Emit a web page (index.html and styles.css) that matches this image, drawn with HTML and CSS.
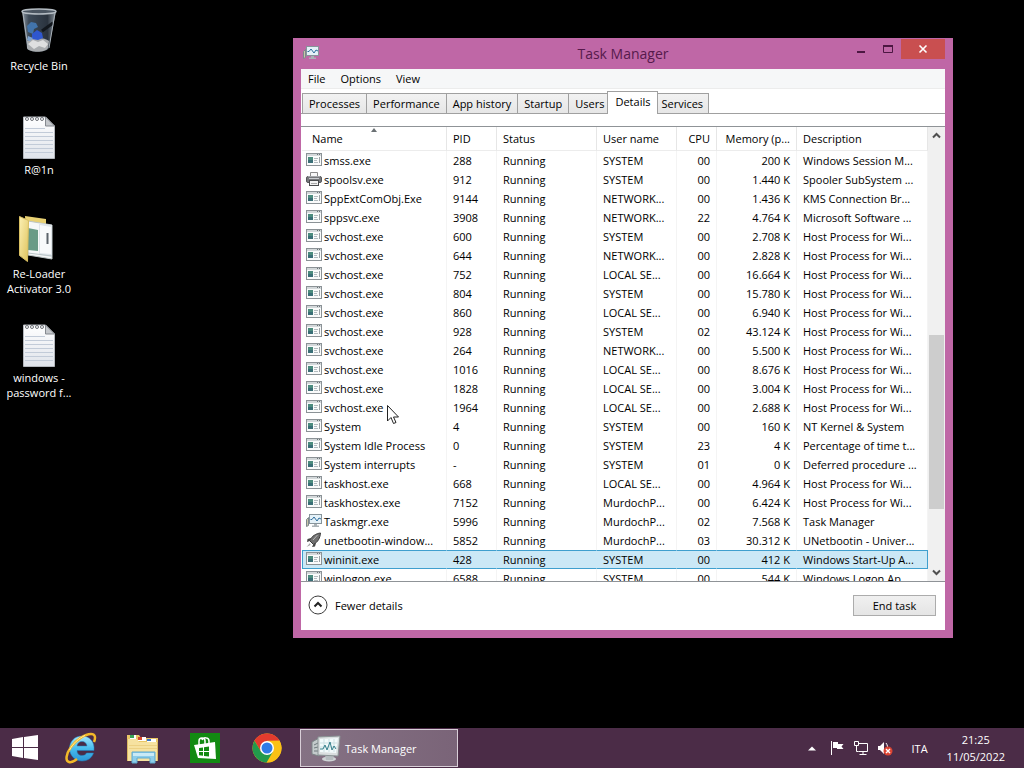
FILE: index.html
```html
<!DOCTYPE html>
<html lang="en">
<head>
    <meta charset="UTF-8">
    <meta name="viewport" content="width=device-width, initial-scale=1.0">
    <title>Task Manager</title>
    <link rel="stylesheet" href="styles.css">
</head>
<body>

<!-- shared icons -->
<svg class="sprite" aria-hidden="true">
    <defs>
        <linearGradient id="paper" x1="0" y1="0" x2="0" y2="1">
            <stop offset="0" stop-color="#ffffff"/>
            <stop offset="1" stop-color="#dfe3ea"/>
        </linearGradient>
        <linearGradient id="folder" x1="0" y1="0" x2="1" y2="1">
            <stop offset="0" stop-color="#fbf0b4"/>
            <stop offset="1" stop-color="#dfc35c"/>
        </linearGradient>
        <linearGradient id="ieBlue" x1="0" y1="0" x2="0" y2="1">
            <stop offset="0" stop-color="#a4e6fb"/>
            <stop offset="0.5" stop-color="#48bdee"/>
            <stop offset="1" stop-color="#2b95d6"/>
        </linearGradient>
        <linearGradient id="glass" x1="0" y1="0" x2="1" y2="0">
            <stop offset="0" stop-color="#8d98a3"/>
            <stop offset="0.2" stop-color="#3d4a58"/>
            <stop offset="0.75" stop-color="#2a333e"/>
            <stop offset="1" stop-color="#8b949c"/>
        </linearGradient>
    </defs>

    <symbol id="i-exe" viewBox="0 0 16 15">
        <rect x="0.5" y="0.5" width="15" height="12" fill="#fafbfb" stroke="#8b9296"/>
        <rect x="1" y="1" width="14" height="2" fill="#d3d8da"/>
        <rect x="11" y="1" width="1" height="1" fill="#6c7377"/>
        <rect x="13" y="1" width="1" height="1" fill="#6c7377"/>
        <rect x="2" y="4" width="5" height="6" fill="#4c8c7e"/>
        <rect x="2" y="7" width="5" height="3" fill="#3a6f77"/>
        <path d="M8 5.500h4M8 7.500h3M8 9.500h4" stroke="#b3bbbf"/>
        <path d="M13.500 4v6" stroke="#9aa2a6"/>
    </symbol>

    <symbol id="i-printer" viewBox="0 0 16 17">
        <path d="M4.500 6V1.500h7V6" fill="#f8f8f8" stroke="#8b8b8b"/>
        <rect x="0.500" y="5.500" width="15" height="6" rx="1.500" fill="#77797c" stroke="#55575a"/>
        <path d="M3 7.500h10" stroke="#c9cccf"/>
        <path d="M2 5.500h12" stroke="#a5a8ab"/>
        <rect x="3.500" y="9.500" width="9" height="5" fill="#f3f3f3" stroke="#4a4c4f"/>
        <path d="M5 12.500h6" stroke="#a9a9a9"/>
    </symbol>

    <symbol id="i-monitor" viewBox="0 0 16 15">
        <path d="M0.500 5.500l2-2v8l-2 1z" fill="#c9c6a8" stroke="#7d888d"/>
        <path d="M8 10h3v1.500h2V13H6v-1.500h2z" fill="#aab2b6"/>
        <rect x="3.500" y="0.500" width="12" height="9" fill="#e4f1f8" stroke="#87949b"/>
        <path d="M4.500 5.500H6L8 3l3 4 2-3 2 1" fill="none" stroke="#2d6c9c"/>
    </symbol>

    <symbol id="i-monitor-lg" viewBox="0 0 30 28">
        <path d="M1 8l7-4v18l-7-2z" fill="#c4cbcc" stroke="#7c8587"/>
        <path d="M3 11l4-2M3 14l4-1M3 17h4" stroke="#6f797c"/>
        <ellipse cx="18" cy="25" rx="7" ry="2.500" fill="#cfd4d6"/>
        <path d="M14 21h9l-1 5h-7z" fill="#b5bcbf"/>
        <path d="M7 3l22-1-2 20-20-1z" fill="#d9dedf" stroke="#8a9395"/>
        <path d="M9 5l18-1-2 15-16-1z" fill="#f2fafb"/>
        <path d="M9 9h17M9 13h17M13 5v13M18 5v13M23 5v13" stroke="#cbdfe2"/>
        <path d="M9 15h3l2-4 2 5 3-8 2 8 2-4 2 3" fill="none" stroke="#35808c"/>
    </symbol>

    <symbol id="i-rocket" viewBox="0 0 16 17">
        <path d="M14.500 1C10 1.500 6 4 3.500 8.500l4 4C12 10 14 6 14.500 1z" fill="#707070" stroke="#3a3a3a"/>
        <path d="M5 6L1.500 7 1 10l3-1zM10 11l-1 3.500L6 15l1.500-3z" fill="#454545"/>
        <path d="M4 11l-3.500 4 4-2z" fill="#a5a5a5"/>
        <path d="M11.500 3L7 8" stroke="#b8b8b8"/>
    </symbol>

    <symbol id="i-note" viewBox="0 0 32 44">
        <path d="M0.500 1h22l9 9v32.500H0.500z" fill="url(#paper)" stroke="#b3b7bd"/>
        <path d="M2 12.500h20M2 16.500h28M2 20.500h28M2 24.500h28M2 28.500h28M2 32.500h28M2 36.500h28" stroke="#c2cbd8"/>
        <path d="M22.500 1v9h9z" fill="#c4c7cb" stroke="#85898f"/>
        <g fill="none" stroke="#6e7278">
            <circle cx="4" cy="3" r="1.500"/>
            <circle cx="9" cy="3" r="1.500"/>
            <circle cx="14" cy="3" r="1.500"/>
            <circle cx="19" cy="3" r="1.500"/>
        </g>
    </symbol>
</svg>

<main class="desktop">
    <nav class="shortcuts" aria-label="Desktop">
        <a class="shortcut" href="#recycle-bin">
            <svg class="shortcut-icon" viewBox="0 0 48 48" aria-hidden="true">
                <path d="M7 4l5 37c1 5 20 5 22 0l7-37z" fill="url(#glass)"/>
                <path d="M12 34c6-4 17-4 22 0l-1 7c-2 5-19 5-21 0z" fill="#a9acaf"/>
                <path d="M13 37l5-4 5 2 5-2 5 4-3 4-6-2-5 3z" fill="#dedfe0"/>
                <path d="M12 19l4-4 5 1 2 4-4 2-1 5-5-2z" fill="#4274ab"/>
                <path d="M17 27l5-4 5 3 1 5-5 2-6-1z" fill="#2f57cf"/>
                <path d="M13 29l5 2-3 3-3-1z" fill="#7fa4d2"/>
                <path d="M38 16L27 24" stroke="#12171d" stroke-width="3"/>
                <path d="M8 6l5 35M40 6l-6 35" stroke="#a9b1b8" fill="none"/>
                <ellipse cx="24" cy="4.500" rx="17" ry="2.500" fill="#4a5561" stroke="#b4bcc3" stroke-width="1.500"/>
            </svg>
            <span>Recycle Bin</span>
        </a>
        <a class="shortcut" href="#r1n">
            <svg class="shortcut-icon" viewBox="-8 -5 48 48" aria-hidden="true"><use href="#i-note" width="32" height="44"/></svg>
            <span>R@1n</span>
        </a>
        <a class="shortcut" href="#re-loader">
            <svg class="shortcut-icon" viewBox="0 0 48 48" aria-hidden="true">
                <path d="M10 1l21 3v35H12z" fill="#e9d173"/>
                <path d="M13 6l24 4v34l-24-4z" fill="#f6f8f8" stroke="#bcc5c5"/>
                <path d="M13 13l10 2v21l-10-1z" fill="#699b87"/>
                <path d="M24 8l13 2v32l-13-2z" fill="#dfe5ea"/>
                <path d="M25 10l11 2v27l-11-1z" fill="#f8fafb"/>
                <path d="M32.500 18v11" stroke="#5c646b" stroke-width="2"/>
                <path d="M13 38l24 3" stroke="#b9c4c6"/>
                <path d="M4.500 1.500l9 4-1 41-8-6z" fill="url(#folder)" stroke="#d9bf62"/>
            </svg>
            <span>Re-Loader<br>Activator 3.0</span>
        </a>
        <a class="shortcut" href="#windows-password">
            <svg class="shortcut-icon" viewBox="-8 -5 48 48" aria-hidden="true"><use href="#i-note" width="32" height="44"/></svg>
            <span>windows -<br>password f...</span>
        </a>
    </nav>

    <section class="window" aria-labelledby="window-title">
        <header class="titlebar">
            <svg class="title-icon" aria-hidden="true"><use href="#i-monitor"/></svg>
            <h1 id="window-title">Task Manager</h1>
            <div class="caption">
                <button type="button" aria-label="Minimize"><svg viewBox="0 0 12 12"><path d="M2 9h8" stroke="#4c1742" stroke-width="2"/></svg></button>
                <button type="button" aria-label="Maximize"><svg viewBox="0 0 12 12"><path d="M1.500 3v6.500h9V3" fill="none" stroke="#4c1742"/><path d="M1 3h10" stroke="#4c1742" stroke-width="2"/></svg></button>
                <button type="button" class="close" aria-label="Close"><svg viewBox="0 0 12 12"><path d="M2.500 2.500l7 7M9.500 2.500l-7 7" stroke="#fff" stroke-width="1.600"/></svg></button>
            </div>
        </header>

        <div class="content">
            <nav class="menubar" aria-label="Menu">
                <button type="button">File</button>
                <button type="button">Options</button>
                <button type="button">View</button>
            </nav>

            <div class="tabs" role="tablist">
                <button type="button" role="tab" class="tab">Processes</button>
                <button type="button" role="tab" class="tab">Performance</button>
                <button type="button" role="tab" class="tab">App history</button>
                <button type="button" role="tab" class="tab">Startup</button>
                <button type="button" role="tab" class="tab">Users</button>
                <button type="button" role="tab" class="tab active" aria-selected="true">Details</button>
                <button type="button" role="tab" class="tab">Services</button>
            </div>

            <div class="list">
                <div class="list-view">
                    <table class="processes">
                        <colgroup>
                            <col class="c-name"><col class="c-pid"><col class="c-status"><col class="c-user"><col class="c-cpu"><col class="c-mem"><col>
                        </colgroup>
                        <thead>
                            <tr>
                                <th class="sorted">Name<svg class="sort" viewBox="0 0 6 4" aria-hidden="true"><path d="M0 4l3-4 3 4z" fill="#6a7073"/></svg></th>
                                <th>PID</th><th>Status</th><th>User name</th><th class="num">CPU</th><th class="num">Memory (p...</th><th>Description</th>
                            </tr>
                        </thead>
                        <tbody>
                            <tr><td><svg class="icon"><use href="#i-exe"/></svg>smss.exe</td><td>288</td><td>Running</td><td>SYSTEM</td><td>00</td><td>200 K</td><td>Windows Session M...</td></tr>
                            <tr><td><svg class="icon"><use href="#i-printer"/></svg>spoolsv.exe</td><td>912</td><td>Running</td><td>SYSTEM</td><td>00</td><td>1.440 K</td><td>Spooler SubSystem ...</td></tr>
                            <tr><td><svg class="icon"><use href="#i-exe"/></svg>SppExtComObj.Exe</td><td>9144</td><td>Running</td><td>NETWORK...</td><td>00</td><td>1.436 K</td><td>KMS Connection Br...</td></tr>
                            <tr><td><svg class="icon"><use href="#i-exe"/></svg>sppsvc.exe</td><td>3908</td><td>Running</td><td>NETWORK...</td><td>22</td><td>4.764 K</td><td>Microsoft Software ...</td></tr>
                            <tr><td><svg class="icon"><use href="#i-exe"/></svg>svchost.exe</td><td>600</td><td>Running</td><td>SYSTEM</td><td>00</td><td>2.708 K</td><td>Host Process for Wi...</td></tr>
                            <tr><td><svg class="icon"><use href="#i-exe"/></svg>svchost.exe</td><td>644</td><td>Running</td><td>NETWORK...</td><td>00</td><td>2.828 K</td><td>Host Process for Wi...</td></tr>
                            <tr><td><svg class="icon"><use href="#i-exe"/></svg>svchost.exe</td><td>752</td><td>Running</td><td>LOCAL SE...</td><td>00</td><td>16.664 K</td><td>Host Process for Wi...</td></tr>
                            <tr><td><svg class="icon"><use href="#i-exe"/></svg>svchost.exe</td><td>804</td><td>Running</td><td>SYSTEM</td><td>00</td><td>15.780 K</td><td>Host Process for Wi...</td></tr>
                            <tr><td><svg class="icon"><use href="#i-exe"/></svg>svchost.exe</td><td>860</td><td>Running</td><td>LOCAL SE...</td><td>00</td><td>6.940 K</td><td>Host Process for Wi...</td></tr>
                            <tr><td><svg class="icon"><use href="#i-exe"/></svg>svchost.exe</td><td>928</td><td>Running</td><td>SYSTEM</td><td>02</td><td>43.124 K</td><td>Host Process for Wi...</td></tr>
                            <tr><td><svg class="icon"><use href="#i-exe"/></svg>svchost.exe</td><td>264</td><td>Running</td><td>NETWORK...</td><td>00</td><td>5.500 K</td><td>Host Process for Wi...</td></tr>
                            <tr><td><svg class="icon"><use href="#i-exe"/></svg>svchost.exe</td><td>1016</td><td>Running</td><td>LOCAL SE...</td><td>00</td><td>8.676 K</td><td>Host Process for Wi...</td></tr>
                            <tr><td><svg class="icon"><use href="#i-exe"/></svg>svchost.exe</td><td>1828</td><td>Running</td><td>LOCAL SE...</td><td>00</td><td>3.004 K</td><td>Host Process for Wi...</td></tr>
                            <tr><td><svg class="icon"><use href="#i-exe"/></svg>svchost.exe</td><td>1964</td><td>Running</td><td>LOCAL SE...</td><td>00</td><td>2.688 K</td><td>Host Process for Wi...</td></tr>
                            <tr><td><svg class="icon"><use href="#i-exe"/></svg>System</td><td>4</td><td>Running</td><td>SYSTEM</td><td>00</td><td>160 K</td><td>NT Kernel &amp; System</td></tr>
                            <tr><td><svg class="icon"><use href="#i-exe"/></svg>System Idle Process</td><td>0</td><td>Running</td><td>SYSTEM</td><td>23</td><td>4 K</td><td>Percentage of time t...</td></tr>
                            <tr><td><svg class="icon"><use href="#i-exe"/></svg>System interrupts</td><td>-</td><td>Running</td><td>SYSTEM</td><td>01</td><td>0 K</td><td>Deferred procedure ...</td></tr>
                            <tr><td><svg class="icon"><use href="#i-exe"/></svg>taskhost.exe</td><td>668</td><td>Running</td><td>LOCAL SE...</td><td>00</td><td>4.964 K</td><td>Host Process for Wi...</td></tr>
                            <tr><td><svg class="icon"><use href="#i-exe"/></svg>taskhostex.exe</td><td>7152</td><td>Running</td><td>MurdochP...</td><td>00</td><td>6.424 K</td><td>Host Process for Wi...</td></tr>
                            <tr><td><svg class="icon"><use href="#i-monitor"/></svg>Taskmgr.exe</td><td>5996</td><td>Running</td><td>MurdochP...</td><td>02</td><td>7.568 K</td><td>Task Manager</td></tr>
                            <tr><td><svg class="icon"><use href="#i-rocket"/></svg>unetbootin-window...</td><td>5852</td><td>Running</td><td>MurdochP...</td><td>03</td><td>30.312 K</td><td>UNetbootin - Univer...</td></tr>
                            <tr class="selected"><td><svg class="icon"><use href="#i-exe"/></svg>wininit.exe</td><td>428</td><td>Running</td><td>SYSTEM</td><td>00</td><td>412 K</td><td>Windows Start-Up A...</td></tr>
                            <tr><td><svg class="icon"><use href="#i-exe"/></svg>winlogon.exe</td><td>6588</td><td>Running</td><td>SYSTEM</td><td>00</td><td>544 K</td><td>Windows Logon Ap...</td></tr>
                        </tbody>
                    </table>
                </div>
                <div class="scrollbar">
                    <button type="button" aria-label="Scroll up"><svg viewBox="0 0 9 9"><path d="M1 6.500l3.500-3.500L8 6.500" fill="none" stroke="#505050" stroke-width="2"/></svg></button>
                    <div class="track-before"></div>
                    <div class="thumb"></div>
                    <div class="track-after"></div>
                    <button type="button" aria-label="Scroll down"><svg viewBox="0 0 9 9"><path d="M1 2.500L4.500 6 8 2.500" fill="none" stroke="#505050" stroke-width="2"/></svg></button>
                </div>
            </div>

            <footer class="actions">
                <button type="button" class="fewer">
                    <svg viewBox="0 0 20 20" aria-hidden="true"><circle cx="10" cy="10" r="9" fill="#fff" stroke="#3c3c3c"/><path d="M6.500 11.500L10 8l3.500 3.500" fill="none" stroke="#222" stroke-width="2"/></svg>
                    <span>Fewer details</span>
                </button>
                <button type="button" class="end-task">End task</button>
            </footer>
        </div>
    </section>

    <svg class="pointer" viewBox="0 0 12 19" aria-hidden="true"><path d="M0.500 0.500v15.500l3.500-3.500 2.500 6 2.500-1-2.500-5.500h5z" fill="#fff" stroke="#222"/></svg>
</main>

<footer class="taskbar">
    <button type="button" class="start" aria-label="Start">
        <svg width="28" height="28" viewBox="0 0 28 28"><path d="M1 5l11-2v10H1zM13 3l14-2v12H13zM1 14h11v10L1 22zM13 14h14v12l-14-2z" fill="#fff"/></svg>
    </button>
    <button type="button" class="pin" aria-label="Internet Explorer">
        <svg width="32" height="32" viewBox="0 0 32 32">
            <path d="M17 4C9.500 4 4.500 9.500 4.500 16.500S10 29 17 29c5.500 0 10-3 11.500-8h-7c-1 1.800-2.500 2.500-4.500 2.500-3 0-5-2-5-5h17C30 9.500 24.500 4 17 4zm-5 10c.5-3 2.300-4.500 5-4.500s4.500 1.500 5 4.500z" fill="url(#ieBlue)" stroke="#1d7fbd" stroke-width="0.500"/>
            <path d="M29 10c2-5 1-8-3-8C20 2 11 8 6 15 1 22 0 29 4 30c2 .5 5-.5 8-3" fill="none" stroke="#f3b929" stroke-width="2.500"/>
            <path d="M20 3.500C14 6 8 11.500 4.500 18" fill="none" stroke="#fff0a4"/>
        </svg>
    </button>
    <button type="button" class="pin" aria-label="File Explorer">
        <svg width="34" height="32" viewBox="0 0 34 32">
            <path d="M1 3h12l2 3h17v22H1z" fill="#e9c766"/>
            <path d="M4 3h6v4H4z" fill="#fff"/><path d="M4 3h4v3H4z" fill="#3aa657"/>
            <path d="M12 5h8v4h-8z" fill="#fff"/><path d="M12 5h4v3h-4z" fill="#d8482f"/>
            <path d="M21 7h9v3h-9z" fill="#fff"/><path d="M21 7h4v2h-4z" fill="#3c79c8"/>
            <path d="M1 7h10l2 3h19v19H1z" fill="#f6e2a0"/>
            <path d="M1.500 7v22M31.500 10v19" stroke="#dcb962"/>
            <path d="M3 13.500h28M3 16.500h28" stroke="#ecd184"/>
            <path d="M6 31V20h23v11h-5v-5H11v5z" fill="#8ccdea" stroke="#5fa9cf"/>
            <path d="M7 21h21v3H7z" fill="#c9eaf6"/>
        </svg>
    </button>
    <button type="button" class="pin" aria-label="Store">
        <svg width="30" height="30" viewBox="0 0 30 30">
            <path d="M0 0h30v30H0z" fill="#128a12"/>
            <path d="M4 12l21-3 1 17-18-1z" fill="#fff"/>
            <path d="M9 12V8c0-4 6-4 6 0v3M12 7c1-3 7-3 7 1v3" fill="none" stroke="#fff" stroke-width="1.500"/>
            <path d="M9 15l4-.6V18H9zM14 14.200l5-.7V18h-5zM9 19h4v3.700L9 22.300zM14 19h5v4.600l-5-.7z" fill="#128a12"/>
        </svg>
    </button>
    <button type="button" class="pin" aria-label="Google Chrome">
        <svg width="30" height="30" viewBox="0 0 30 30">
            <circle cx="15" cy="15" r="14.500" fill="#fbc116"/>
            <path d="M2.440 7.750A14.500 14.500 0 0 1 27.560 7.750L15 8 9 18.500z" fill="#e33b2e"/>
            <path d="M27.560 7.750H15v7.500l6 3.250-6.400 11A14.500 14.500 0 0 0 27.560 7.750z" fill="#fbc116"/>
            <path d="M2.440 7.750A14.500 14.500 0 0 0 14.600 29.500L21 18.500l-6 3-6-3z" fill="#229a4c"/>
            <circle cx="15" cy="15" r="7" fill="#fff"/>
            <circle cx="15" cy="15" r="5.500" fill="#2f7be6"/>
        </svg>
    </button>
    <button type="button" class="task">
        <svg width="30" height="28" aria-hidden="true"><use href="#i-monitor-lg"/></svg>
        <span>Task Manager</span>
    </button>

    <div class="tray">
        <button type="button" class="more" aria-label="Show hidden icons"><svg width="8" height="5" viewBox="0 0 8 5"><path d="M0 4.500L4 0.500l4 4z" fill="#fff"/></svg></button>
        <button type="button" aria-label="Action Center"><svg width="16" height="16" viewBox="0 0 16 16"><path d="M2.500 1v14" stroke="#fff"/><path d="M4 2h5v2h5.500l-2 2.500 2 2.500H8V8H4z" fill="#fff"/></svg></button>
        <button type="button" aria-label="Network"><svg width="16" height="16" viewBox="0 0 16 16" fill="none" stroke="#fff"><path d="M6 3.500h8.500v8H5.500M10 12v2.500M6.500 14.500h7"/><path d="M1.500 1.500h4v4h-4zM3.500 6v5.500M3.500 11.500h2"/></svg></button>
        <button type="button" aria-label="Volume muted"><svg width="16" height="16" viewBox="0 0 16 16"><path d="M1 6h2l4-4v12L3 10H1z" fill="#fff"/><path d="M9 3c1.500 2 2 4 1 7" stroke="#fff" fill="none"/><circle cx="11" cy="11" r="4.500" fill="#dc4534"/><path d="M9 9l4 4M13 9l-4 4" stroke="#fff" stroke-width="1.400"/></svg></button>
        <button type="button" class="lang">ITA</button>
        <button type="button" class="clock"><time datetime="2022-05-11T21:25">21:25<br>11/05/2022</time></button>
    </div>
</footer>

</body>
</html>
```
FILE: styles.css
```css
* {
    box-sizing: border-box;
}

body {
    margin: 0;
    height: 100vh;
    display: flex;
    flex-direction: column;
    overflow: hidden;
    background-color: #000;
    color: #000;
    font-family: "Segoe UI", "Open Sans", sans-serif;
    font-size: 11px;
    line-height: 15px;
}

button {
    margin: 0;
    padding: 0;
    border: 0;
    background: none;
    color: inherit;
    font: inherit;
    white-space: nowrap;
}

svg {
    display: block;
}

.sprite {
    position: absolute;
    width: 0;
    height: 0;
}

/* Desktop */
.desktop {
    position: relative;
    flex: 1;
    min-height: 0;
}

.shortcuts {
    display: grid;
    grid-auto-rows: 104px;
    width: 78px;
    padding-top: 7px;
}

.shortcut {
    display: flex;
    flex-direction: column;
    align-items: center;
    gap: 3px;
    color: #fff;
    text-align: center;
    text-decoration: none;
    white-space: nowrap;
}

.shortcut-icon {
    width: 48px;
    height: 48px;
}

.pointer {
    position: absolute;
    left: 387px;
    top: 405px;
    width: 12px;
    height: 19px;
}

/* Window */
.window {
    position: absolute;
    top: 38px;
    right: 71px;
    bottom: 90px;
    left: 293px;
    display: flex;
    flex-direction: column;
    padding: 0 8px 8px;
    background-color: #bf67a6;
}

.titlebar {
    display: grid;
    grid-template-columns: 1fr auto 1fr;
    align-items: center;
    height: 31px;
    flex: none;
}

.titlebar h1 {
    margin: 0;
    font-size: 14px;
    line-height: 20px;
    font-weight: 400;
    color: #561a4c;
}

.title-icon {
    width: 16px;
    height: 15px;
    margin-left: 2px;
}

.caption {
    display: flex;
    justify-content: flex-end;
    align-self: start;
    padding-top: 1px;
}

.caption button {
    display: grid;
    place-items: center;
    width: 27px;
    height: 20px;
}

.caption svg {
    width: 12px;
    height: 12px;
}

.caption .close {
    width: 44px;
    background-color: #c94f50;
}

.content {
    flex: 1;
    min-height: 0;
    display: flex;
    flex-direction: column;
    background-color: #fff;
}

.menubar {
    display: flex;
    gap: 15px;
    height: 20px;
    flex: none;
    padding: 0 7px;
    background-color: #f6f7f8;
    border-bottom: 1px solid #ececec;
}

.tabs {
    display: flex;
    align-items: flex-end;
    height: 25px;
    flex: none;
    padding-left: 1px;
    border-bottom: 1px solid #a0a0a0;
}

.tab {
    height: 20px;
    padding: 0 6px;
    border: 1px solid #a0a0a0;
    border-width: 1px 1px 0 1px;
    background: linear-gradient(#f2f2f2, #e6e6e6);
}

.tab + .tab {
    border-left-width: 0;
}

/* the open tab is taller and laps over its neighbours */
.tab + .tab.active {
    z-index: 1;
    height: 23px;
    margin: 0 -2px -1px -4px;
    padding: 0 7px 3px;
    border-left-width: 1px;
    background: #fff;
}

.tab.active + .tab {
    padding: 0 5px;
}

/* Process list */
.list {
    flex: 1;
    min-height: 0;
    display: flex;
    margin-top: 12px;
    border-top: 1px solid #8f9397;
    border-bottom: 1px solid #8f9397;
}

.list-view {
    flex: 1;
    min-width: 0;
    overflow: hidden;
    padding-left: 1px;
}

.processes {
    width: 100%;
    table-layout: fixed;
    border-collapse: separate;
    border-spacing: 0;
}

.c-name { width: 145px; }
.c-pid { width: 50px; }
.c-status { width: 100px; }
.c-user { width: 80px; }
.c-cpu { width: 40px; }
.c-mem { width: 80px; }

.processes th,
.processes td {
    padding: 0 6px;
    font-weight: 400;
    text-align: left;
    white-space: nowrap;
    border-right: 1px solid #f4f4f4;
}

.processes th {
    height: 24px;
    border-right-color: #e6e6e6;
    border-bottom: 1px solid #ececec;
}

.processes .sorted {
    position: relative;
    padding-left: 10px;
}

.sort {
    position: absolute;
    top: 1px;
    left: 48%;
    width: 6px;
    height: 4px;
}

.processes td {
    height: 19px;
    line-height: 19px;
}

.processes td:first-child {
    padding-left: 4px;
}

.processes .num,
.processes td:nth-child(5),
.processes td:nth-child(6) {
    text-align: right;
}

.icon {
    display: inline-block;
    width: 16px;
    height: 19px;
    margin-right: 2px;
    vertical-align: top;
}

.processes .selected td {
    background-color: #cbe8f6;
    border-top: 1px solid #3f9fce;
    border-bottom: 1px solid #3f9fce;
    border-right-color: #cbe8f6;
    line-height: 17px;
}

.processes .selected td:first-child {
    border-left: 1px solid #3f9fce;
    padding-left: 3px;
}

.processes .selected td:last-child {
    border-right-color: #3f9fce;
}

.selected .icon {
    height: 17px;
}

.scrollbar {
    display: flex;
    flex-direction: column;
    width: 17px;
    background-color: #f0f0f0;
}

.scrollbar button {
    display: grid;
    place-items: center;
    height: 17px;
}

.scrollbar svg {
    width: 9px;
    height: 9px;
}

.track-before { flex: 45; }

.thumb {
    flex: 41;
    margin: 0 1px;
    background-color: #cdcdcd;
}

.track-after { flex: 13; }

/* Bottom of the window */
.actions {
    display: flex;
    align-items: center;
    justify-content: space-between;
    flex: none;
    height: 48px;
    padding: 0 9px 2px 7px;
}

.fewer {
    display: flex;
    align-items: center;
    gap: 7px;
}

.fewer svg {
    width: 20px;
    height: 20px;
}

.end-task {
    width: 83px;
    height: 21px;
    border: 1px solid #acacac;
    background: linear-gradient(#f0f0f0, #e5e5e5);
}

/* Taskbar */
.taskbar {
    display: flex;
    height: 40px;
    flex: none;
    background-color: #4b2c47;
    color: #fff;
}

.start,
.pin {
    display: grid;
    place-items: center;
    width: 50px;
}

.pin {
    width: 62px;
}

.task {
    display: flex;
    align-items: center;
    gap: 4px;
    width: 158px;
    height: 38px;
    margin: 1px 0 0 2px;
    padding: 0 10px;
    border: 1px solid #d9cfd8;
    background: linear-gradient(90deg, #857284, #7a6478);
}

.tray {
    display: flex;
    align-items: center;
    gap: 8px;
    margin-left: auto;
    padding-right: 19px;
}

.more {
    margin-right: 5px;
}

.lang {
    padding: 0 11px;
}

.clock {
    line-height: 17px;
    text-align: center;
}
```
